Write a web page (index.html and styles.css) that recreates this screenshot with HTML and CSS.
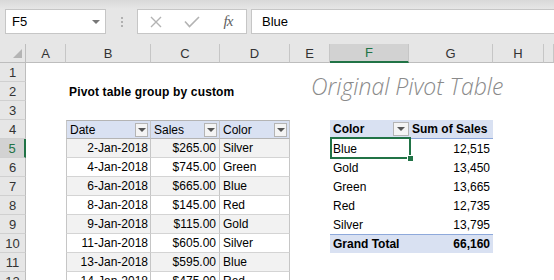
FILE: index.html
```html
<!DOCTYPE html>
<html lang="en">
<head>
    <meta charset="UTF-8">
    <meta name="viewport" content="width=device-width, initial-scale=1.0">
    <title>Pivot table group by custom</title>
    <link rel="stylesheet" href="styles.css">
</head>
<body>
    <div class="toolbar">
        <div class="name-box">F5<span class="name-arrow"></span></div>
        <div class="grip"><span></span><span></span><span></span></div>
        <div class="fx-buttons">
            <span class="fx-slot">
                <svg width="12" height="12" viewBox="0 0 12 12"><path d="M1 1 L11 11 M11 1 L1 11" stroke="#b3b3b3" stroke-width="1.4" fill="none"/></svg>
            </span>
            <span class="fx-slot">
                <svg width="16" height="12" viewBox="0 0 16 12"><path d="M1 5.5 L5.5 10.5 L15 1" stroke="#b3b3b3" stroke-width="1.6" fill="none"/></svg>
            </span>
            <span class="fx-slot fx">fx</span>
        </div>
        <div class="formula">Blue</div>
    </div>

    <div class="sheet">
        <!-- column headers -->
        <div class="corner"></div>
        <div class="col-head">A</div>
        <div class="col-head">B</div>
        <div class="col-head">C</div>
        <div class="col-head">D</div>
        <div class="col-head">E</div>
        <div class="col-head active">F</div>
        <div class="col-head">G</div>
        <div class="col-head">H</div>
        <div class="col-head"></div>

        <!-- row 1 -->
        <div class="row-head">1</div>
        <div class="cell span-9"></div>

        <!-- row 2 -->
        <div class="row-head">2</div>
        <div class="cell"></div>
        <div class="cell title">Pivot table group by custom</div>
        <div class="cell note">Original Pivot Table</div>

        <!-- row 3 -->
        <div class="row-head">3</div>
        <div class="cell span-9"></div>

        <!-- row 4 -->
        <div class="row-head">4</div>
        <div class="cell"></div>
        <div class="t head first">Date<span class="filter"></span></div>
        <div class="t head">Sales<span class="filter"></span></div>
        <div class="t head">Color<span class="filter"></span></div>
        <div class="cell"></div>
        <div class="pv head">Color<span class="filter wide"></span></div>
        <div class="pv head">Sum of Sales</div>
        <div class="cell span-2"></div>

        <!-- row 5 -->
        <div class="row-head active">5</div>
        <div class="cell"></div>
        <div class="t first num band">2-Jan-2018</div>
        <div class="t num band">$265.00</div>
        <div class="t band">Silver</div>
        <div class="cell"></div>
        <div class="pv selected">Blue</div>
        <div class="pv num">12,515</div>
        <div class="cell span-2"></div>

        <!-- row 6 -->
        <div class="row-head">6</div>
        <div class="cell"></div>
        <div class="t first num">4-Jan-2018</div>
        <div class="t num">$745.00</div>
        <div class="t">Green</div>
        <div class="cell"></div>
        <div class="pv">Gold</div>
        <div class="pv num">13,450</div>
        <div class="cell span-2"></div>

        <!-- row 7 -->
        <div class="row-head">7</div>
        <div class="cell"></div>
        <div class="t first num band">6-Jan-2018</div>
        <div class="t num band">$665.00</div>
        <div class="t band">Blue</div>
        <div class="cell"></div>
        <div class="pv">Green</div>
        <div class="pv num">13,665</div>
        <div class="cell span-2"></div>

        <!-- row 8 -->
        <div class="row-head">8</div>
        <div class="cell"></div>
        <div class="t first num">8-Jan-2018</div>
        <div class="t num">$145.00</div>
        <div class="t">Red</div>
        <div class="cell"></div>
        <div class="pv">Red</div>
        <div class="pv num">12,735</div>
        <div class="cell span-2"></div>

        <!-- row 9 -->
        <div class="row-head">9</div>
        <div class="cell"></div>
        <div class="t first num band">9-Jan-2018</div>
        <div class="t num band">$115.00</div>
        <div class="t band">Gold</div>
        <div class="cell"></div>
        <div class="pv">Silver</div>
        <div class="pv num">13,795</div>
        <div class="cell span-2"></div>

        <!-- row 10 -->
        <div class="row-head">10</div>
        <div class="cell"></div>
        <div class="t first num">11-Jan-2018</div>
        <div class="t num">$605.00</div>
        <div class="t">Silver</div>
        <div class="cell"></div>
        <div class="pv total">Grand Total</div>
        <div class="pv total num">66,160</div>
        <div class="cell span-2"></div>

        <!-- row 11 -->
        <div class="row-head">11</div>
        <div class="cell"></div>
        <div class="t first num band">13-Jan-2018</div>
        <div class="t num band">$595.00</div>
        <div class="t band">Blue</div>
        <div class="cell span-5"></div>

        <!-- row 12 -->
        <div class="row-head">12</div>
        <div class="cell"></div>
        <div class="t first num">14-Jan-2018</div>
        <div class="t num">$475.00</div>
        <div class="t">Red</div>
        <div class="cell span-5"></div>
    </div>
</body>
</html>
```

FILE: styles.css
```css
body {
    margin: 0;
    width: 554px;
    height: 280px;
    overflow: hidden;
    background-color: #fff;
    font-family: "Liberation Sans", Arial, sans-serif;
    font-size: 12px;
    color: #000;
}

/* formula bar */

.toolbar {
    display: flex;
    align-items: flex-start;
    height: 44px;
    padding: 9px 0 0 5px;
    box-sizing: border-box;
    background: linear-gradient(#d9d9d9, #e6e6e6 9px);
}

.name-box,
.fx-buttons,
.formula {
    height: 25px;
    box-sizing: border-box;
    background-color: #fff;
    border: 1px solid #c6c6c6;
    display: flex;
    align-items: center;
}

.name-box {
    position: relative;
    width: 101px;
    padding-left: 6px;
    font-size: 13px;
}

.name-arrow {
    position: absolute;
    right: 5px;
    top: 10px;
    border-left: 4px solid transparent;
    border-right: 4px solid transparent;
    border-top: 4px solid #777;
}

.grip {
    width: 31px;
    height: 25px;
    display: flex;
    flex-direction: column;
    align-items: center;
    justify-content: center;
    gap: 2px;
}

.grip span {
    width: 2px;
    height: 2px;
    background-color: #b0b0b0;
}

.fx-buttons {
    width: 110px;
}

.fx-slot {
    width: 36px;
    display: flex;
    justify-content: center;
    align-items: center;
}

.fx {
    font-family: "Liberation Serif", serif;
    font-style: italic;
    font-size: 15px;
    color: #606060;
    letter-spacing: -1px;
}

.formula {
    flex: 1;
    margin-left: 4px;
    border-right: none;
    padding-left: 10px;
    font-size: 13px;
}

/* grid */

.sheet {
    display: grid;
    grid-template-columns: 26px 40px 85px 69px 70px 40px 79px 84px 51px 10px;
    grid-auto-rows: 19px;
}

.sheet > div {
    box-sizing: border-box;
    display: flex;
    align-items: center;
    white-space: nowrap;
}

.corner {
    position: relative;
    background-color: #e6e6e6;
    border-right: 1px solid #bdbdbd;
    border-bottom: 1px solid #bdbdbd;
}

.corner::after {
    content: "";
    position: absolute;
    right: 3px;
    bottom: 4px;
    border-left: 9px solid transparent;
    border-bottom: 9px solid #b4b4b4;
}

.col-head {
    justify-content: center;
    background-color: #e6e6e6;
    border-right: 1px solid #c6c6c6;
    border-bottom: 1px solid #bdbdbd;
    color: #333;
    font-size: 13px;
}

.col-head.active {
    background-color: #d2d2d2;
    color: #217346;
    border-bottom: 2px solid #217346;
}

.row-head {
    justify-content: center;
    background-color: #e6e6e6;
    border-right: 1px solid #bdbdbd;
    border-bottom: 1px solid #d0d0d0;
    color: #333;
    font-size: 13px;
}

.row-head.active {
    background-color: #d2d2d2;
    color: #217346;
    border-right: 2px solid #217346;
}

.span-2 { grid-column: span 2; }
.span-5 { grid-column: span 5; }
.span-9 { grid-column: span 9; }

.title {
    grid-column: span 3;
    padding-left: 3px;
    font-weight: bold;
    letter-spacing: 0.15px;
}

.sheet > .note {
    grid-column: span 5;
    display: block;
    padding-left: 21px;
    line-height: 8px;
    font-family: "Open Sans", sans-serif;
    font-style: italic;
    font-weight: 300;
    font-size: 23px;
    color: #8a8a8a;
}

/* source table */

.t {
    padding: 0 3px;
    border-right: 1px solid #c6c6c6;
    border-bottom: 1px solid #d4d4d4;
}

.t.first {
    border-left: 1px solid #c6c6c6;
    padding-right: 2px;
}

.t.num {
    justify-content: flex-end;
}

.t.band {
    background-color: #f2f2f2;
}

.t.head {
    justify-content: space-between;
    padding-right: 2px;
    background-color: #d9e1f2;
    border-top: 1px solid #b4b4b4;
    border-bottom: 1px solid #b4b4b4;
}

.filter {
    width: 13px;
    height: 14px;
    box-sizing: border-box;
    border: 1px solid #b4b4b4;
    background-color: #f4f4f4;
    display: flex;
    justify-content: center;
    align-items: center;
}

.filter::after {
    content: "";
    border-left: 4px solid transparent;
    border-right: 4px solid transparent;
    border-top: 4px solid #555;
}

.filter.wide {
    width: 16px;
}

/* pivot table */

.pv {
    padding: 0 3px;
}

.pv.num {
    justify-content: flex-end;
}

.pv.head {
    justify-content: space-between;
    padding-right: 0;
    background-color: #d9e1f2;
    border-bottom: 1px solid #8ea9db;
    font-weight: bold;
}

.pv.head + .pv.head {
    padding-left: 3px;
}

.pv.total {
    background-color: #d9e1f2;
    border-top: 1px solid #8ea9db;
    font-weight: bold;
}

.pv.selected {
    position: relative;
}

.pv.selected::after {
    content: "";
    position: absolute;
    top: -2px;
    left: 0;
    right: -2px;
    bottom: -1px;
    border: 2px solid #217346;
}

.pv.selected::before {
    content: "";
    position: absolute;
    right: -5px;
    bottom: -4px;
    width: 5px;
    height: 5px;
    background-color: #217346;
    border: 1px solid #fff;
    z-index: 1;
}
```
